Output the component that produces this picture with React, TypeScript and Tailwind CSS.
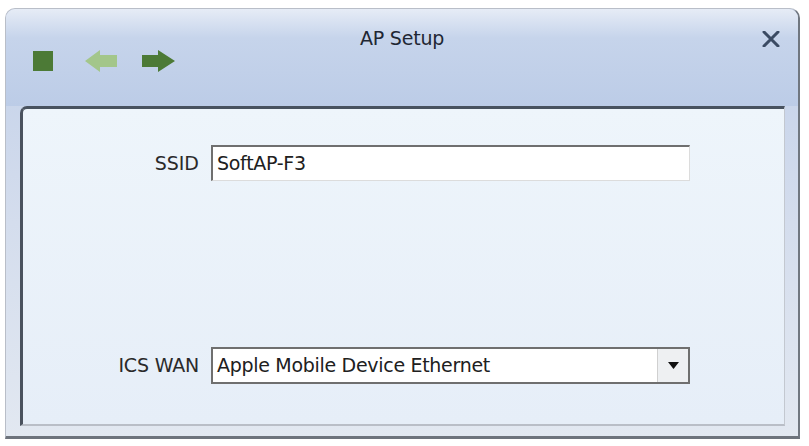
import React from "react";

export default function App() {
  const font = { fontFamily: '"DejaVu Sans", Verdana, sans-serif' };
  return (
    <div className="w-[809px] h-[446px] bg-white pt-[8px] pl-[5px] overflow-hidden" style={font}>
      <div className="w-[795px] h-[431px] flex flex-col rounded-t-[10px] border border-[#b9bec8] border-r-[2px] border-r-[#707780] border-b-[3px] border-b-[#6d737c] bg-gradient-to-b from-[#c2d0e9] via-[#d4dded] to-[#e2e8f1]">
        {/* Header */}
        <div className="h-[97px] shrink-0 relative flex items-start rounded-t-[9px] bg-gradient-to-b from-[#e6ecf6] via-[#c6d4eb] via-[30%] to-[#bccce7]">
          <div className="flex items-center pl-[27px] pt-[40px]">
            <div className="w-[20px] h-[20px] bg-[#4c7a36]" />
            <svg width="33" height="24" viewBox="0 0 33 24" className="ml-[32px]">
              <path d="M0 12 L15 1 L15 6 L32 6 L32 18 L15 18 L15 23 Z" fill="#a3c68a" />
            </svg>
            <svg width="35" height="24" viewBox="0 0 35 24" className="ml-[23px]">
              <path d="M34 12 L17 1 L17 6 L1 6 L1 18 L17 18 L17 23 Z" fill="#4c7a36" />
            </svg>
          </div>
          <div className="absolute left-0 right-0 top-[15px] text-center text-[19px] text-[#1f2733] tracking-[-0.2px]">
            AP Setup
          </div>
          <svg className="absolute right-[18px] top-[22px]" width="18" height="16" viewBox="0 0 18 16">
            <path d="M2 1 L16 15 M16 1 L2 15" stroke="#3b4b63" strokeWidth="3" strokeLinecap="round" />
          </svg>
        </div>
        {/* Body panel */}
        <div className="flex-1 ml-[14px] mr-[13px] mb-[10px] rounded-tl-[7px] border-t-[3px] border-l-[3px] border-t-[#48525f] border-l-[#4a525e] border-r border-r-[#c3c8d0] border-b-[2px] border-b-[#b9bec7] bg-gradient-to-b from-[#eef5fb] to-[#e6eef8] flex flex-col pt-[36px]">
          <div className="flex items-center">
            <div className="w-[176px] text-right text-[19px] text-[#2a2a2a]">SSID</div>
            <div className="ml-[12px] w-[479px] h-[36px] bg-white border-t-[2px] border-l-[2px] border-t-[#6f6f6f] border-l-[#6f6f6f] border-r border-b border-r-[#dcdcdc] border-b-[#dcdcdc] flex items-center pl-[4px] text-[19px] text-[#202020] tracking-[-0.3px]">
              SoftAP-F3
            </div>
          </div>
          <div className="flex items-center mt-[166px]">
            <div className="w-[176px] text-right text-[19px] text-[#2a2a2a] tracking-[-0.2px]">ICS WAN</div>
            <div className="ml-[12px] w-[479px] h-[37px] bg-white border-[2px] border-[#6f6f6f] flex items-center">
              <div className="flex-1 pl-[4px] text-[19px] text-[#202020] tracking-[-0.3px] whitespace-nowrap">
                Apple Mobile Device Ethernet
              </div>
              <div className="w-[31px] h-full bg-[#eef0f2] border-l border-[#d0d0d0] flex items-center justify-center">
                <svg width="11" height="7" viewBox="0 0 11 7">
                  <path d="M0 0 L11 0 L5.5 7 Z" fill="#111" />
                </svg>
              </div>
            </div>
          </div>
        </div>
      </div>
    </div>
  );
}
